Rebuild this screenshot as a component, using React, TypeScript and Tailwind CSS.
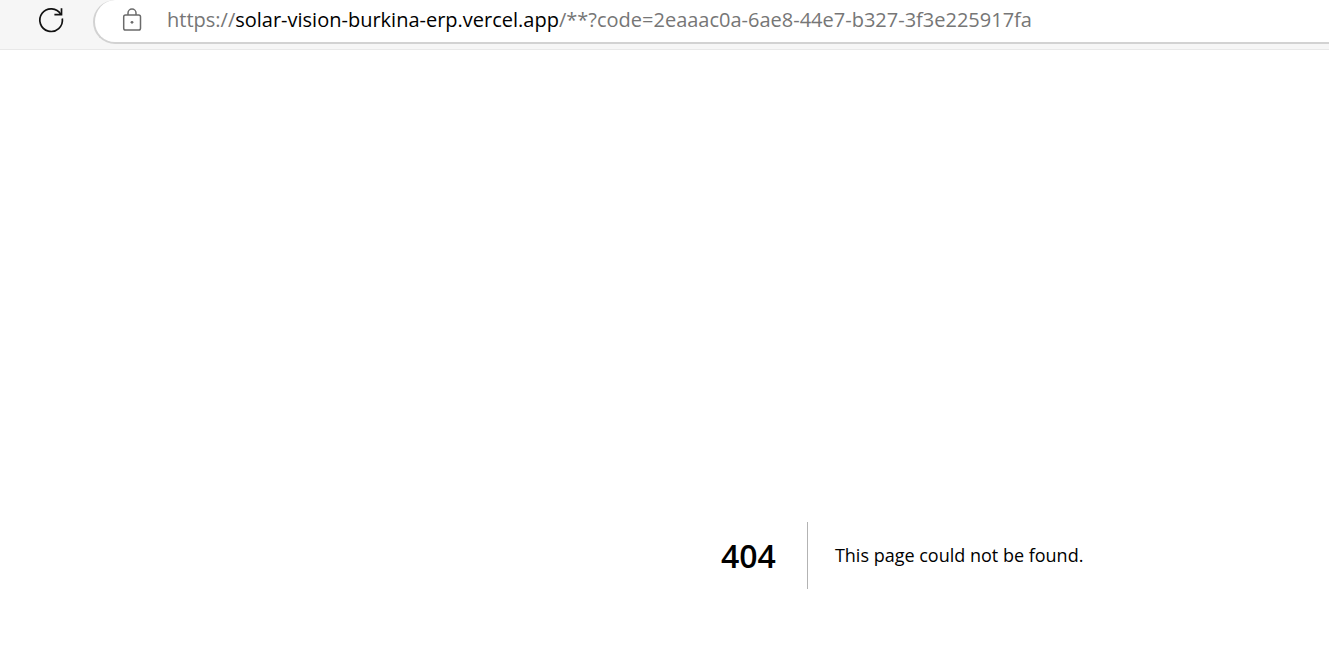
export default function App() {
  return (
    <div className="flex min-h-screen flex-col bg-white font-['Open_Sans','Noto_Sans',sans-serif] text-black">
      <header className="flex h-[50px] items-start border-b border-[#e8e8e8] bg-[#f6f6f6] pl-9">
        <button type="button" aria-label="Refresh" className="flex h-10 w-[30px] items-center justify-center">
          <svg viewBox="0 0 30 30" className="size-[30px]" fill="none" stroke="#111" strokeWidth="1.7">
            <path d="M26.3 13.5A11.3 11.3 0 1 1 24.9 9.5" />
            <path d="M25.5 3.2V9.7H18.4" />
          </svg>
        </button>
        <div className="ml-[27px] flex h-[44px] flex-1 items-start overflow-hidden rounded-l-[22px] border-b-2 border-l-2 border-[#d2d2d2] bg-white pl-[27px]">
          <button type="button" aria-label="View site information" className="flex h-10 items-center">
            <svg viewBox="0 0 20 24" className="h-6 w-5" fill="none" stroke="#6b6b6b" strokeWidth="1.5">
              <rect x="1.7" y="7" width="16.8" height="15" rx="1.8" />
              <path d="M6 7V5a4 4 0 0 1 8 0v2" />
              <circle cx="10" cy="14.3" r="1.4" fill="#6b6b6b" stroke="none" />
            </svg>
          </button>
          <div
            role="textbox"
            aria-label="Address"
            aria-readonly="true"
            tabIndex={0}
            className="ml-[25px] whitespace-nowrap text-[20px] leading-10 text-[#767676]"
          >
            https://<span className="text-black">solar-vision-burkina-erp.vercel.app</span>/**?code=2eaaac0a-6ae8-44e7-b327-3f3e225917fa
          </div>
        </div>
      </header>
      <main className="grid flex-1 grid-cols-[721fr_608fr] items-end pb-[77px]">
        <div className="col-start-2 flex h-[67px] items-center">
          <h1 className="flex h-full items-center border-r border-[#b3b3b3] pr-[31px] text-[32px] font-semibold">404</h1>
          <h2 className="ml-[27px] whitespace-nowrap text-[18px]">This page could not be found.</h2>
        </div>
      </main>
    </div>
  );
}
